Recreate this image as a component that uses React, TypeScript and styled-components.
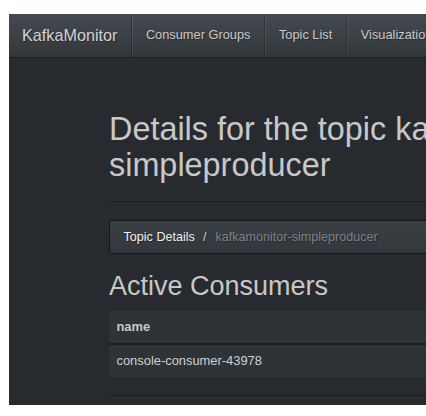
import React from "react";
import styled, { createGlobalStyle } from "styled-components";

const Global = createGlobalStyle`
  html, body {
    margin: 0;
    padding: 0;
    background: #ffffff;
    overflow: hidden;
  }
  body {
    padding: 14px 0 0 9px;
    font-family: "Liberation Sans", Arial, Helvetica, sans-serif;
  }
`;

const Page = styled.div`
  background: #272b30;
  width: 417px;
  height: 391px;
  overflow: hidden;
  color: #c8c8c8;
  font-size: 12.6px;
  line-height: 1.428;
`;

const NavBar = styled.nav`
  display: flex;
  align-items: stretch;
  height: 44px;
  width: 900px;
  box-sizing: border-box;
  background-image: linear-gradient(#454a51, #3a3f44 60%, #32363b);
  border-bottom: 1px solid rgba(0, 0, 0, 0.6);
`;

const NavItem = styled.a<{ $brand?: boolean }>`
  display: flex;
  align-items: center;
  padding: ${(p) => (p.$brand ? "0 14px 0 13px" : "0 14px 0 13.5px")};
  font-size: ${(p) => (p.$brand ? "16.2px" : "12.8px")};
  color: ${(p) => (p.$brand ? "#d2d2d2" : "#c8c8c8")};
  text-decoration: none;
  text-shadow: 1px 1px 1px rgba(0, 0, 0, 0.3);
  border-right: 1px solid rgba(0, 0, 0, 0.25);
  box-shadow: 1px 0 0 rgba(255, 255, 255, 0.08);
  white-space: nowrap;
`;

const Container = styled.main`
  width: 600px;
  margin-left: 100px;
`;

const PageHeader = styled.header`
  margin-top: 54px;
  padding-bottom: 17.5px;
  border-bottom: 1px solid #1c1e22;
  margin-bottom: 18px;
`;

const Title = styled.h1`
  margin: 0;
  font-size: 32.4px;
  line-height: 1.1;
  font-weight: 400;
  color: #c8c8c8;
`;

const Breadcrumb = styled.ol`
  display: flex;
  list-style: none;
  margin: 0 0 18px;
  padding: 7.2px 13.5px;
  line-height: 18px;
  font-size: 12.6px;
  background-image: linear-gradient(#3a3f44, #34383d);
  border: 1px solid rgba(0, 0, 0, 0.6);
  border-radius: 3.6px;
  text-shadow: 1px 1px 1px rgba(0, 0, 0, 0.3);
`;

const Crumb = styled.li<{ $active?: boolean }>`
  color: ${(p) => (p.$active ? "#7a8288" : "#f0f0f0")};
  &:not(:first-child)::before {
    content: "/";
    padding: 0 9px 0 8px;
    color: #cccccc;
  }
`;

const SectionTitle = styled.h2`
  margin: 0 0 9px;
  font-size: 27px;
  line-height: 1.1;
  font-weight: 400;
  color: #c8c8c8;
`;

const Table = styled.table`
  width: 100%;
  border-collapse: collapse;
  margin-bottom: 18px;
  font-size: 12.9px;
`;

const HeadCell = styled.th`
  text-align: left;
  padding: 7.2px 7.2px 7.2px 7.5px;
  line-height: 18px;
  font-weight: 700;
  background: #2e3338;
  color: #c8c8c8;
  border-bottom: 2px solid #1c1e22;
`;

const Cell = styled.td`
  padding: 7.2px 7.2px 7.2px 7.5px;
  line-height: 17.6px;
  background: #2e3338;
  color: #d0d0d0;
`;

const Divider = styled.hr`
  margin: 0;
  border: 0;
  border-top: 1px solid #1c1e22;
`;

export default function App() {
  return (
    <>
      <Global />
      <Page>
        <NavBar>
          <NavItem $brand>KafkaMonitor</NavItem>
          <NavItem>Consumer Groups</NavItem>
          <NavItem>Topic List</NavItem>
          <NavItem>Visualizations</NavItem>
        </NavBar>
        <Container>
          <PageHeader>
            <Title>Details for the topic kafkamonitor-simpleproducer</Title>
          </PageHeader>
          <Breadcrumb>
            <Crumb>Topic Details</Crumb>
            <Crumb $active>kafkamonitor-simpleproducer</Crumb>
          </Breadcrumb>
          <SectionTitle>Active Consumers</SectionTitle>
          <Table>
            <thead>
              <tr>
                <HeadCell>name</HeadCell>
              </tr>
            </thead>
            <tbody>
              <tr>
                <Cell>console-consumer-43978</Cell>
              </tr>
            </tbody>
          </Table>
          <Divider />
        </Container>
      </Page>
    </>
  );
}
